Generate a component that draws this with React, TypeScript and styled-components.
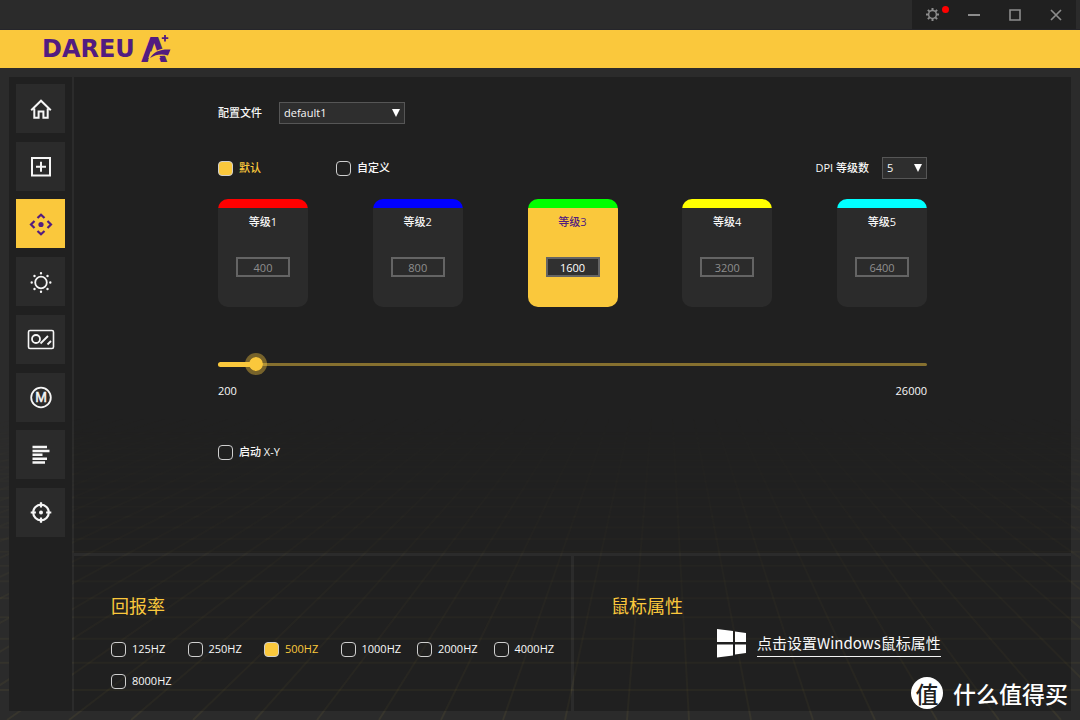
import React, { useState } from "react";
import styled, { createGlobalStyle } from "styled-components";

const gold = "#fac83c";
const purple = "#521c80";

const GlobalStyle = createGlobalStyle`
  *, *::before, *::after { box-sizing: border-box; }
  body {
    margin: 0;
    background: #2b2b2b;
    color: #f8f8f8;
    font: 500 11px/16px "Open Sans", "Noto Sans", "Noto Sans CJK SC", sans-serif;
  }
  button, input, select { font: inherit; color: inherit; margin: 0; }
`;

const Window = styled.div`
  position: relative;
  isolation: isolate;
  min-height: 100vh;
  display: flex;
  flex-direction: column;
`;

const Backdrop = styled.svg`
  position: absolute;
  inset: 0;
  width: 100%;
  height: 100%;
  z-index: -1;
`;

const TitleBar = styled.div`
  height: 30px;
  padding-right: 4px;
  display: flex;
  justify-content: flex-end;
  border-bottom: 1px solid #25252b;
`;

const WindowButton = styled.button`
  width: 41px;
  border: 0;
  padding: 0;
  background: #202020;
  color: #8c8c8c;
  display: grid;
  place-items: center;
`;

const Badge = styled.span`
  position: absolute;
  top: -1px;
  right: -9px;
  width: 7px;
  height: 7px;
  border-radius: 50%;
  background: #ff0000;
`;

const BadgeHost = styled.span`
  position: relative;
  display: grid;
`;

const Brand = styled.header`
  height: 38px;
  padding-left: 42px;
  display: flex;
  align-items: center;
  gap: 5px;
  background: ${gold};
  color: ${purple};
`;

const BrandName = styled.span`
  font: bold 24px/38px "DejaVu Sans", sans-serif;
`;

const BrandMark = styled.svg`
  overflow: visible;
`;

const Body = styled.div`
  flex: 1;
  display: flex;
  gap: 2px;
  padding: 9px;
`;

const Sidebar = styled.nav`
  width: 63px;
  padding: 7px;
  background: #202020;
`;

const NavList = styled.div`
  height: 453px;
  display: flex;
  flex-direction: column;
  justify-content: space-between;
`;

const NavButton = styled.button<{ $active?: boolean }>`
  width: 49px;
  height: 49px;
  padding: 0;
  border: 0;
  display: grid;
  place-items: center;
  background: ${(p) => (p.$active ? gold : "#2b2b2b")};
  color: ${(p) => (p.$active ? purple : "#f6f6f6")};
`;

const Content = styled.main`
  flex: 1;
  display: flex;
  flex-direction: column;
  gap: 3px;
`;

const DpiPanel = styled.section`
  flex: 1;
  padding: 25px 144px;
  background: rgba(0, 0, 0, 0.25);
`;

const Row = styled.div`
  display: flex;
  align-items: center;
`;

const ProfileRow = styled(Row)`
  gap: 17px;
  margin-bottom: 33px;
`;

const ModeRow = styled(Row)`
  justify-content: space-between;
  margin-bottom: 20px;
`;

const ModeOptions = styled.div`
  display: grid;
  grid-template-columns: 118px auto;
`;

const LevelCount = styled(Row)`
  gap: 13px;
`;

const SelectBox = styled.span<{ $width: number }>`
  display: grid;
  align-items: center;
  width: ${(p) => p.$width}px;

  & > * {
    grid-area: 1 / 1;
  }
  svg {
    justify-self: end;
    margin-right: 5px;
    pointer-events: none;
  }
`;

const SelectField = styled.select`
  appearance: none;
  width: 100%;
  height: 22px;
  padding: 0 4px;
  border: 1px solid #565656;
  border-radius: 0;
  background: #2e2e2e;
`;

const Option = styled.label<{ $on?: boolean }>`
  display: flex;
  align-items: center;
  gap: 6px;
  color: ${(p) => (p.$on ? gold : "inherit")};
`;

const Tick = styled.input`
  appearance: none;
  flex: none;
  width: 15px;
  height: 15px;
  border: 1px solid #cfcfcf;
  border-radius: 4px;

  &:checked {
    background: ${gold};
  }
`;

const Cards = styled.div`
  display: flex;
  justify-content: space-between;
  margin-bottom: 46px;
`;

const Card = styled.div<{ $color: string; $active: boolean }>`
  width: 90px;
  height: 108px;
  border-radius: 10px;
  overflow: hidden;
  display: flex;
  flex-direction: column;
  align-items: center;
  gap: 27px;
  padding-top: 15px;
  background: ${(p) =>
    `linear-gradient(${p.$color} 9px, ${p.$active ? gold : "#2b2b2b"} 9px)`};
  color: ${(p) => (p.$active ? purple : "inherit")};
`;

const DpiInput = styled.input<{ $active: boolean }>`
  width: 54px;
  height: 20px;
  padding: 0;
  border: 2px solid #646464;
  text-align: center;
  background: ${(p) => (p.$active ? "#303030" : "transparent")};
  color: ${(p) => (p.$active ? "#ffffff" : "#8e8e8e")};
`;

const Slider = styled.div`
  display: grid;
  align-items: center;

  & > * {
    grid-area: 1 / 1;
  }
`;

const Rail = styled.div`
  height: 3px;
  border-radius: 2px;
  background: #86702f;
`;

const RailFill = styled.div`
  height: 5px;
  border-radius: 3px;
  background: ${gold};
`;

const Range = styled.input`
  appearance: none;
  height: 22px;
  margin: 0 -11px;
  background: transparent;

  &::-webkit-slider-thumb {
    appearance: none;
    width: 22px;
    height: 22px;
    border: 4px solid rgba(250, 200, 60, 0.4);
    border-radius: 50%;
    background: ${gold};
    background-clip: padding-box;
  }
`;

const RangeEnds = styled.div`
  display: flex;
  justify-content: space-between;
  margin: 8px 0 45px;
`;

const BottomPanels = styled.div`
  display: grid;
  grid-template-columns: 497px 1fr;
  gap: 3px;
`;

const BottomPanel = styled.section`
  height: 155px;
  padding: 38px 1px 0 37px;
  background: rgba(0, 0, 0, 0.25);
`;

const Heading = styled.h2`
  margin: 0;
  font-size: 18px;
  line-height: 24px;
  font-weight: 400;
  color: ${gold};
`;

const RateGrid = styled.div`
  display: grid;
  grid-template-columns: repeat(6, 1fr);
  row-gap: 16px;
  margin-top: 23px;
`;

const SystemRow = styled(Row)`
  gap: 11px;
  margin: 11px 0 0 106px;
`;

const SystemLink = styled.a`
  color: #f8f8f8;
  font: 400 15px/26px "Noto Sans CJK SC", sans-serif;
  text-decoration: none;
  border-bottom: 1px solid #f4f4f4;
`;

const Watermark = styled.div`
  position: absolute;
  right: 12px;
  bottom: 10px;
  display: flex;
  align-items: center;
  gap: 10px;
  color: #ffffff;
  font: 500 23px/34px "Noto Sans CJK SC", sans-serif;
`;

const Seal = styled.span`
  width: 32px;
  height: 32px;
  border-radius: 50%;
  background: #ffffff;
  color: #202020;
  display: grid;
  place-items: center;
  line-height: 32px;
`;

/* Perspective floor: rays from one vanishing point, rows spaced by 1/z. */
const vanish = { x: 664, y: 263 };
const rays = Array.from({ length: 61 }, (_, i) => 627 + (i - 30) * 62);
const rows = Array.from({ length: 24 }, (_, i) => vanish.y + 1 / (0.002342 + 0.00016 * (i - 1)));

function Floor() {
  return (
    <Backdrop viewBox="0 0 1080 720" preserveAspectRatio="xMidYMax slice" aria-hidden="true">
      <defs>
        <linearGradient id="fade" x1="0" y1="410" x2="0" y2="720" gradientUnits="userSpaceOnUse">
          <stop offset="0" stopColor="#fff" stopOpacity="0" />
          <stop offset="0.5" stopColor="#fff" stopOpacity="0.5" />
          <stop offset="1" stopColor="#fff" stopOpacity="1" />
        </linearGradient>
        <mask id="floor" maskUnits="userSpaceOnUse" x="0" y="400" width="1080" height="320">
          <rect x="0" y="400" width="1080" height="320" fill="url(#fade)" />
        </mask>
      </defs>
      <g mask="url(#floor)" stroke="#e8c050" strokeOpacity="0.065" strokeWidth="2">
        {rays.map((x) => (
          <line key={x} x1={vanish.x} y1={vanish.y} x2={x} y2="720" />
        ))}
        {rows.map((y) => (
          <line key={y} x1="0" y1={y} x2="1080" y2={y} />
        ))}
      </g>
    </Backdrop>
  );
}

const Arrow = () => (
  <svg width="8" height="8" viewBox="0 0 8 8" fill="#fff" aria-hidden="true">
    <path d="M0 0h8L4 8z" />
  </svg>
);

const Glyph = ({ w = 24, children }: { w?: number; children: React.ReactNode }) => (
  <svg width={w} height="24" viewBox={`0 0 ${w} 24`} fill="none" stroke="currentColor" strokeWidth="1.8" aria-hidden="true">
    {children}
  </svg>
);

const navItems = [
  {
    name: "主页",
    icon: (
      <Glyph>
        <path d="M2.2 13.2 12 3.700 21.800 13.200M5.300 11.500v9.300h4.300v-6.300h4.800v6.300h4.300v-9.300" strokeWidth="2" />
      </Glyph>
    ),
  },
  {
    name: "按键",
    icon: (
      <Glyph>
        <path d="M3 4h18v17.500H3zM12 7.700v10M7 12.700h10" strokeWidth="2" />
      </Glyph>
    ),
  },
  {
    name: "DPI",
    icon: (
      <Glyph>
        <circle cx="12" cy="12.500" r="2.600" fill="currentColor" stroke="none" />
        <path
          d="M8.500 6 12 2.700 15.500 6M8.500 19l3.500 3.300 3.500-3.300M5.500 9 2 12.500 5.500 16M18.500 9l3.500 3.500-3.500 3.500"
          strokeWidth="2.200"
        />
      </Glyph>
    ),
  },
  {
    name: "灯光",
    icon: (
      <Glyph>
        <circle cx="12" cy="12.500" r="5.800" />
        <path
          d="M12 3.200v.01M12 21.800v.01M2.700 12.500h.01M21.300 12.500h.01M5.500 6h.01M18.500 6h.01M5.500 19h.01M18.500 19h.01"
          strokeWidth="2.400"
          strokeLinecap="round"
        />
      </Glyph>
    ),
  },
  {
    name: "参数",
    icon: (
      <Glyph w={28}>
        <rect x="1.500" y="3.500" width="25" height="18" rx="1.500" strokeWidth="1.600" />
        <circle cx="9" cy="12" r="4" />
        <path d="M13.500 16.500 21 9M20.500 17.500l3.500-3.500" />
      </Glyph>
    ),
  },
  {
    name: "宏",
    icon: (
      <Glyph>
        <circle cx="12" cy="12.500" r="9.800" />
        <text x="12" y="17.300" textAnchor="middle" fontSize="14" fontFamily="Liberation Sans, sans-serif" fill="currentColor" strokeWidth="0.500">
          M
        </text>
      </Glyph>
    ),
  },
  {
    name: "列表",
    icon: (
      <Glyph>
        <path d="M3.500 4h14.500M3.500 7.900h17M3.500 11.800h10M3.500 15.700h14.500M3.500 19.600h12.500" strokeWidth="2.500" />
      </Glyph>
    ),
  },
  {
    name: "校准",
    icon: (
      <Glyph>
        <circle cx="12" cy="12.500" r="7.800" strokeWidth="2.200" />
        <circle cx="12" cy="12.500" r="2" fill="currentColor" stroke="none" />
        <path d="M12 2.200v5.200M12 17.600v5.200M1.700 12.500h5.200M17.100 12.500h5.200" strokeWidth="2.200" />
      </Glyph>
    ),
  },
];

const levels = [
  { color: "#ff0000", dpi: "400" },
  { color: "#0000ff", dpi: "800" },
  { color: "#00ff00", dpi: "1600" },
  { color: "#ffff00", dpi: "3200" },
  { color: "#00ffff", dpi: "6400" },
];

const pollingRates = ["125HZ", "250HZ", "500HZ", "1000HZ", "2000HZ", "4000HZ", "8000HZ"];
const minDpi = 200;
const maxDpi = 26000;

export default function App() {
  const [page, setPage] = useState(2);
  const [mode, setMode] = useState("默认");
  const [active, setActive] = useState(2);
  const [values, setValues] = useState(levels.map((l) => l.dpi));
  const [rate, setRate] = useState("500HZ");
  const [splitAxes, setSplitAxes] = useState(false);

  const setValue = (index: number, value: string) =>
    setValues(values.map((v, i) => (i === index ? value : v)));
  const current = Number(values[active]) || minDpi;
  const filled = ((current - minDpi) / (maxDpi - minDpi)) * 100;

  return (
    <Window>
      <GlobalStyle />
      <Floor />
      <TitleBar>
        <WindowButton aria-label="设置">
          <BadgeHost>
            <svg width="15" height="15" viewBox="0 0 15 15" fill="none" stroke="currentColor" strokeWidth="2">
              <circle cx="7.500" cy="7.500" r="3.900" strokeWidth="1.500" />
              <path d="M7.500 1v2.500M7.500 11.500V14M1 7.500h2.500M11.500 7.500H14M2.900 2.900l1.700 1.700M10.400 10.400l1.700 1.700M12.100 2.900l-1.700 1.700M4.600 10.400l-1.700 1.700" />
            </svg>
            <Badge />
          </BadgeHost>
        </WindowButton>
        <WindowButton aria-label="最小化">
          <svg width="12" height="12" stroke="currentColor" strokeWidth="2">
            <path d="M0 6h12" />
          </svg>
        </WindowButton>
        <WindowButton aria-label="最大化">
          <svg width="12" height="12" fill="none" stroke="currentColor" strokeWidth="1.600">
            <path d="M1 1h10v10H1z" />
          </svg>
        </WindowButton>
        <WindowButton aria-label="关闭">
          <svg width="12" height="12" stroke="currentColor" strokeWidth="1.700">
            <path d="M1 1l10 10M11 1 1 11" />
          </svg>
        </WindowButton>
      </TitleBar>

      <Brand>
        <BrandName>DAREU</BrandName>
        <BrandMark width="32" height="38" viewBox="0 0 32 38" aria-hidden="true">
          <text x="1" y="32" fontSize="34" fontWeight="700" fontFamily="DejaVu Sans, sans-serif" fill={purple}>
            A
          </text>
          <path d="M10.500 21.500h7l3 6.500H8.300z" fill={gold} />
          <path d="M8 30c6-4 12-5 22-4v-8C18 18 12 22 8 30z" fill={gold} />
          <path d="M10 28C14 21.500 20 19 30.500 19.500l-2.500 6c-7-1.800-12-.8-18 2.500z" fill={purple} />
          <path d="M25 5v6.500M21.800 8.200h6.500" stroke={purple} strokeWidth="1.800" />
        </BrandMark>
      </Brand>

      <Body>
        <Sidebar>
          <NavList>
            {navItems.map((item, i) => (
              <NavButton key={item.name} aria-label={item.name} $active={page === i} onClick={() => setPage(i)}>
                {item.icon}
              </NavButton>
            ))}
          </NavList>
        </Sidebar>

        <Content>
          <DpiPanel>
            <ProfileRow>
              <label htmlFor="profile">配置文件</label>
              <SelectBox $width={126}>
                <SelectField id="profile">
                  <option>default1</option>
                </SelectField>
                <Arrow />
              </SelectBox>
            </ProfileRow>

            <ModeRow>
              <ModeOptions>
                {["默认", "自定义"].map((name) => (
                  <Option key={name} $on={mode === name}>
                    <Tick type="radio" name="mode" checked={mode === name} onChange={() => setMode(name)} />
                    {name}
                  </Option>
                ))}
              </ModeOptions>
              <LevelCount>
                <label htmlFor="levels">DPI 等级数</label>
                <SelectBox $width={45}>
                  <SelectField id="levels">
                    <option>5</option>
                  </SelectField>
                  <Arrow />
                </SelectBox>
              </LevelCount>
            </ModeRow>

            <Cards>
              {levels.map((level, i) => (
                <Card key={level.color} $color={level.color} $active={active === i}>
                  <label htmlFor={`dpi-${i}`}>等级{i + 1}</label>
                  <DpiInput
                    id={`dpi-${i}`}
                    $active={active === i}
                    value={values[i]}
                    onFocus={() => setActive(i)}
                    onChange={(e) => setValue(i, e.target.value)}
                  />
                </Card>
              ))}
            </Cards>

            <Slider>
              <Rail />
              <RailFill style={{ width: `${filled}%` }} />
              <Range
                type="range"
                aria-label="DPI"
                min={minDpi}
                max={maxDpi}
                value={current}
                onChange={(e) => setValue(active, e.target.value)}
              />
            </Slider>
            <RangeEnds>
              <span>{minDpi}</span>
              <span>{maxDpi}</span>
            </RangeEnds>

            <Option>
              <Tick type="checkbox" checked={splitAxes} onChange={() => setSplitAxes(!splitAxes)} />
              启动 X-Y
            </Option>
          </DpiPanel>

          <BottomPanels>
            <BottomPanel>
              <Heading>回报率</Heading>
              <RateGrid>
                {pollingRates.map((name) => (
                  <Option key={name} $on={rate === name}>
                    <Tick type="radio" name="rate" checked={rate === name} onChange={() => setRate(name)} />
                    {name}
                  </Option>
                ))}
              </RateGrid>
            </BottomPanel>
            <BottomPanel>
              <Heading>鼠标属性</Heading>
              <SystemRow>
                <svg width="29" height="29" viewBox="0 0 29 29" fill="#fff" aria-hidden="true">
                  <path d="M0 0l16 2v11H0zM18 2.500l11 1.500v9H18zM0 15.500h16v11L0 28.500zM18 15.500h11v8.500l-11 1.500z" />
                </svg>
                <SystemLink href="#mouse">点击设置Windows鼠标属性</SystemLink>
              </SystemRow>
            </BottomPanel>
          </BottomPanels>
        </Content>
      </Body>

      <Watermark>
        <Seal>值</Seal>
        <span>什么值得买</span>
      </Watermark>
    </Window>
  );
}
